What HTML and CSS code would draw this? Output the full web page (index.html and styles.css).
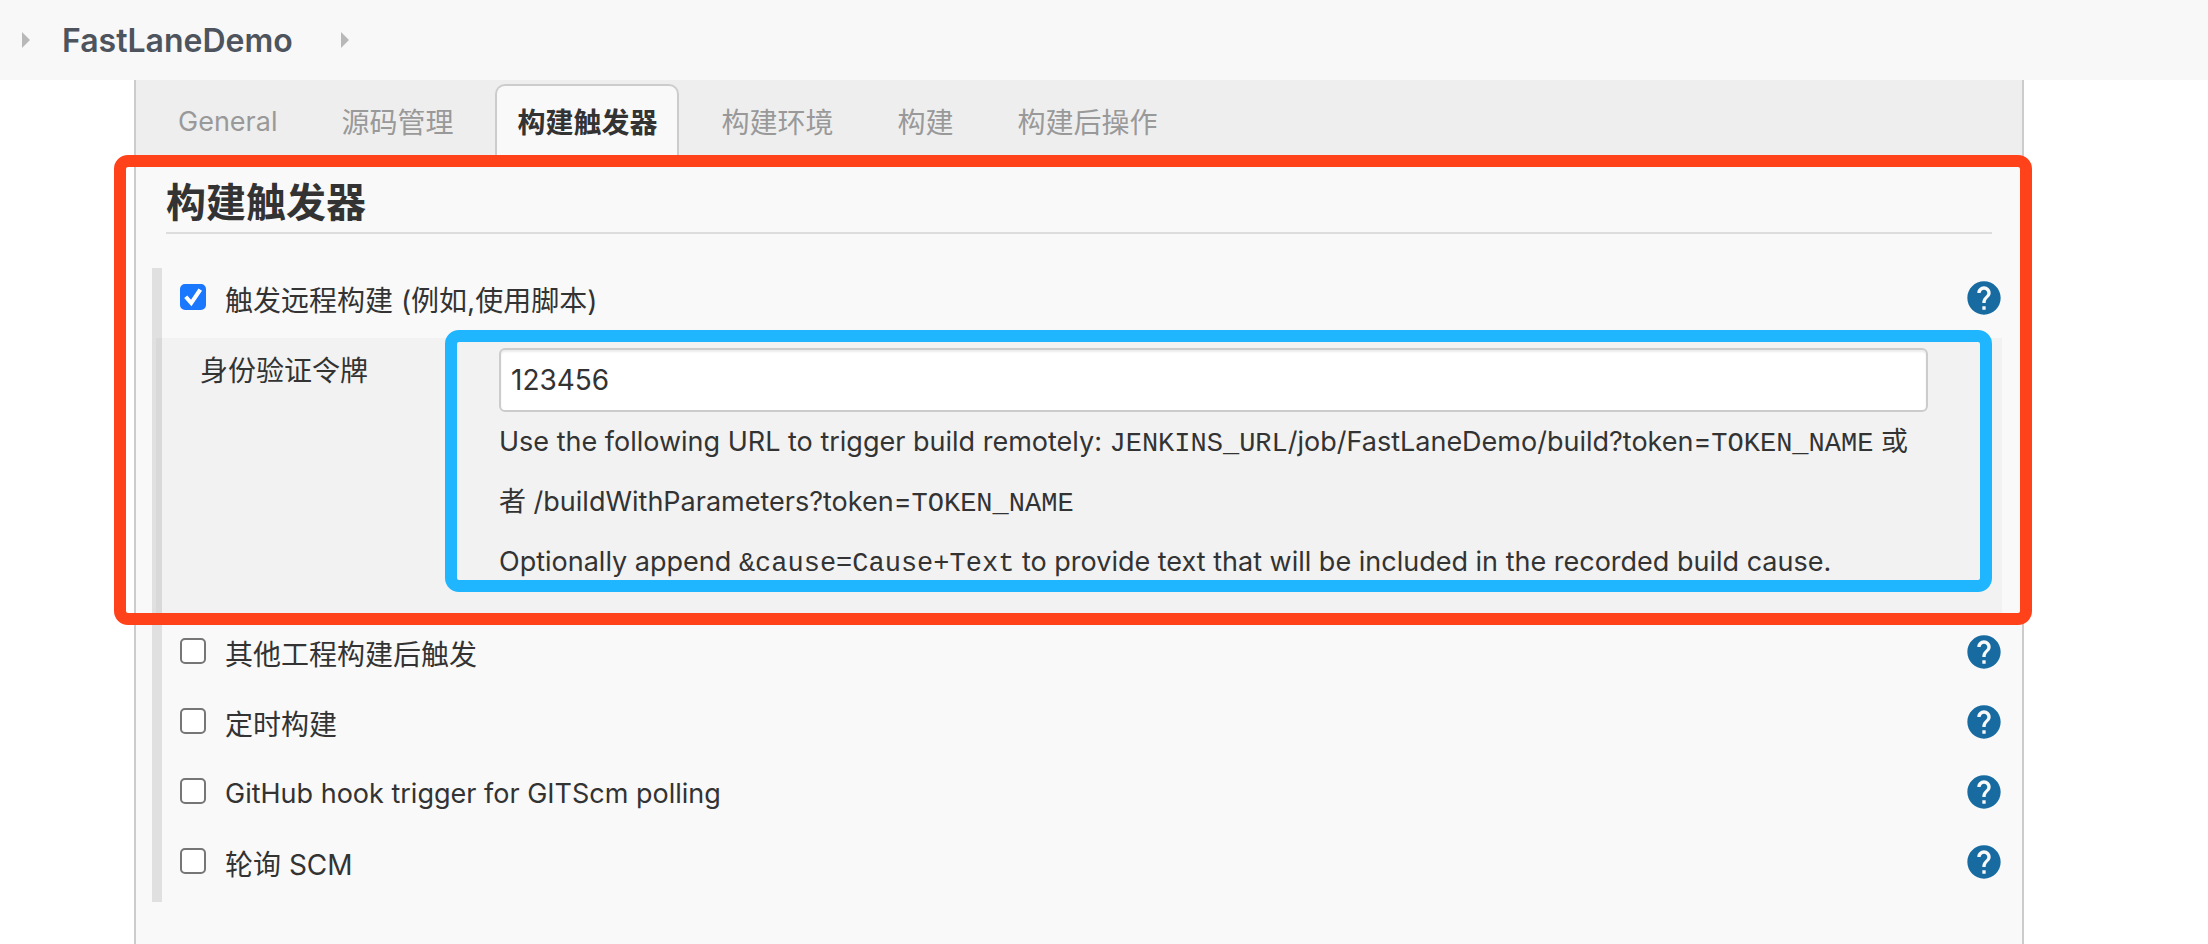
FILE: index.html
```html
<!DOCTYPE html>
<html lang="zh-CN">
<head>
<meta charset="utf-8">
<title>FastLaneDemo</title>
<link rel="stylesheet" href="styles.css">
</head>
<body>
<svg class="icon-defs">
  <symbol id="icon-help" viewBox="0 0 24 24"><path d="M12 2C6.48 2 2 6.48 2 12s4.48 10 10 10 10-4.48 10-10S17.52 2 12 2zm1 17h-2v-2h2v2zm2.07-7.75l-.9.92C13.45 12.9 13 13.5 13 15h-2v-.5c0-1.1.45-2.1 1.17-2.83l1.24-1.26c.37-.36.59-.86.59-1.41 0-1.1-.9-2-2-2s-2 .9-2 2H8c0-2.21 1.79-4 4-4s4 1.79 4 4c0 .88-.36 1.68-.93 2.25z"/></symbol>
  <symbol id="icon-arrow" viewBox="0 0 8 16"><path d="M0 0L8 8L0 16Z"/></symbol>
</svg>
<nav class="breadcrumbs">
  <svg class="crumb-arrow"><use href="#icon-arrow"/></svg>
  <a class="crumb" href="#">FastLaneDemo</a>
  <svg class="crumb-arrow"><use href="#icon-arrow"/></svg>
</nav>
<main class="panel">
  <div class="tabs">
    <button class="tab latin" type="button">General</button>
    <button class="tab" type="button">源码管理</button>
    <button class="tab tab-active" type="button">构建触发器</button>
    <button class="tab" type="button">构建环境</button>
    <button class="tab" type="button">构建</button>
    <button class="tab" type="button">构建后操作</button>
  </div>
  <form class="section">
    <h1 class="section-title">构建触发器</h1>
    <div class="triggers">
      <div class="trigger">
        <input class="check" type="checkbox" id="remote" checked>
        <label class="trigger-label" for="remote">触发远程构建 (例如,使用脚本)</label>
        <button class="help" type="button" aria-label="帮助"><svg class="help-icon"><use href="#icon-help"/></svg></button>
      </div>
      <div class="token">
        <label class="token-label" for="token">身份验证令牌</label>
        <div class="token-field">
          <input class="token-input" type="text" id="token" value="123456">
          <p class="hint latin">Use the following URL to trigger build remotely: <code>JENKINS_URL</code>/job/FastLaneDemo/build?token=<code>TOKEN_NAME</code> 或者 /buildWithParameters?token=<code>TOKEN_NAME</code></p>
          <p class="hint latin">Optionally append <code>&amp;cause=Cause+Text</code> to provide text that will be included in the recorded build cause.</p>
        </div>
        <div class="frame frame-blue"></div>
      </div>
      <div class="trigger">
        <input class="check" type="checkbox" id="upstream">
        <label class="trigger-label" for="upstream">其他工程构建后触发</label>
        <button class="help" type="button" aria-label="帮助"><svg class="help-icon"><use href="#icon-help"/></svg></button>
      </div>
      <div class="trigger">
        <input class="check" type="checkbox" id="timer">
        <label class="trigger-label" for="timer">定时构建</label>
        <button class="help" type="button" aria-label="帮助"><svg class="help-icon"><use href="#icon-help"/></svg></button>
      </div>
      <div class="trigger">
        <input class="check" type="checkbox" id="github">
        <label class="trigger-label latin" for="github">GitHub hook trigger for GITScm polling</label>
        <button class="help" type="button" aria-label="帮助"><svg class="help-icon"><use href="#icon-help"/></svg></button>
      </div>
      <div class="trigger">
        <input class="check" type="checkbox" id="scm">
        <label class="trigger-label" for="scm">轮询 SCM</label>
        <button class="help" type="button" aria-label="帮助"><svg class="help-icon"><use href="#icon-help"/></svg></button>
      </div>
    </div>
    <div class="frame frame-red"></div>
  </form>
</main>
</body>
</html>
```
FILE: styles.css
```css
* { box-sizing: border-box; }

body {
  display: flex;
  flex-direction: column;
  min-height: 100vh;
  margin: 0;
  background: #fff;
  color: #333;
  font-family: Inter, "Noto Sans CJK SC", sans-serif;
  font-size: 28px;
}

button, input { font: inherit; color: inherit; }

.icon-defs { display: none; }

.breadcrumbs {
  display: flex;
  align-items: center;
  height: 80px;
  padding: 0 22px;
  background: #f8f8f8;
}

.crumb-arrow { width: 8px; height: 16px; fill: #b8b8b8; }

.crumb {
  margin: 0 48px 0 32px;
  color: #4d545d;
  font-size: 32px;
  font-weight: 600;
  text-decoration: none;
}

.panel {
  flex: 1;
  margin: 0 184px 0 134px;
  border: solid #ccc;
  border-width: 0 2px;
  background: #f9f9f9;
}

.tabs {
  display: flex;
  gap: 20px;
  height: 76px;
  padding: 4px 20px 0;
  background: #eee;
}

.tab {
  padding: 0 20px;
  border: 2px solid transparent;
  border-bottom: 0;
  border-radius: 10px 10px 0 0;
  background: none;
  color: #999;
}

.tab-active {
  border-color: #ccc;
  background: #f9f9f9;
  color: #333;
  font-weight: 700;
}

.latin { font-size: 27px; }

.section {
  position: relative;
  padding: 18px 20px 40px 16px;
}

.section-title {
  margin: 0 10px 34px 14px;
  border-bottom: 2px solid #ddd;
  font-size: 40px;
  font-weight: 700;
  line-height: 58px;
}

.triggers { border-left: 10px solid #e0e0e0; }

.trigger {
  display: flex;
  align-items: center;
  height: 70px;
  padding: 0 0 10px 18px;
}

.check {
  display: grid;
  place-items: center;
  width: 26px;
  height: 26px;
  margin: 0 19px 2px 0;
  border: 2px solid #767676;
  border-radius: 5px;
  background: #fff;
  appearance: none;
}

.check:checked { border-color: #1a78ff; background: #1a78ff; }

.check:checked::before {
  width: 22px;
  height: 22px;
  background: #fff;
  clip-path: polygon(10% 54%, 24% 43%, 41% 63%, 75% 11%, 91% 22%, 43% 92%);
  content: "";
}

.trigger-label { flex: 1; padding-top: 2px; }

.help { margin: 0 -2px 0 0; padding: 0; border: 0; background: none; }

.help-icon { display: block; width: 40px; height: 40px; fill: #176ba0; }

.token {
  position: relative;
  display: grid;
  grid-template-columns: 299px 1fr;
  margin-left: -6px;
  padding: 10px 74px 30px 44px;
  background: rgba(0, 0, 0, 0.027);
}

.token-label { line-height: 46px; }

.token-input {
  display: block;
  width: 100%;
  height: 64px;
  padding: 0 10px;
  border: 2px solid #ccc;
  border-radius: 6px;
  background: #fff;
  box-shadow: inset 0 2px 2px rgba(0, 0, 0, 0.08);
}

.hint { margin: 0; line-height: 60px; }

code { font-family: "Liberation Mono", monospace; font-size: 27px; line-height: 1; }

/* Highlight frames drawn over the form */
.frame {
  position: absolute;
  border: 12px solid;
  border-radius: 14px;
  pointer-events: none;
}

.frame-red {
  top: -1px;
  right: -10px;
  left: -22px;
  height: 470px;
  border-color: #ff421a;
}

.frame-blue {
  top: -8px;
  right: 10px;
  bottom: 30px;
  left: 289px;
  border-color: #1fb5ff;
}
```
